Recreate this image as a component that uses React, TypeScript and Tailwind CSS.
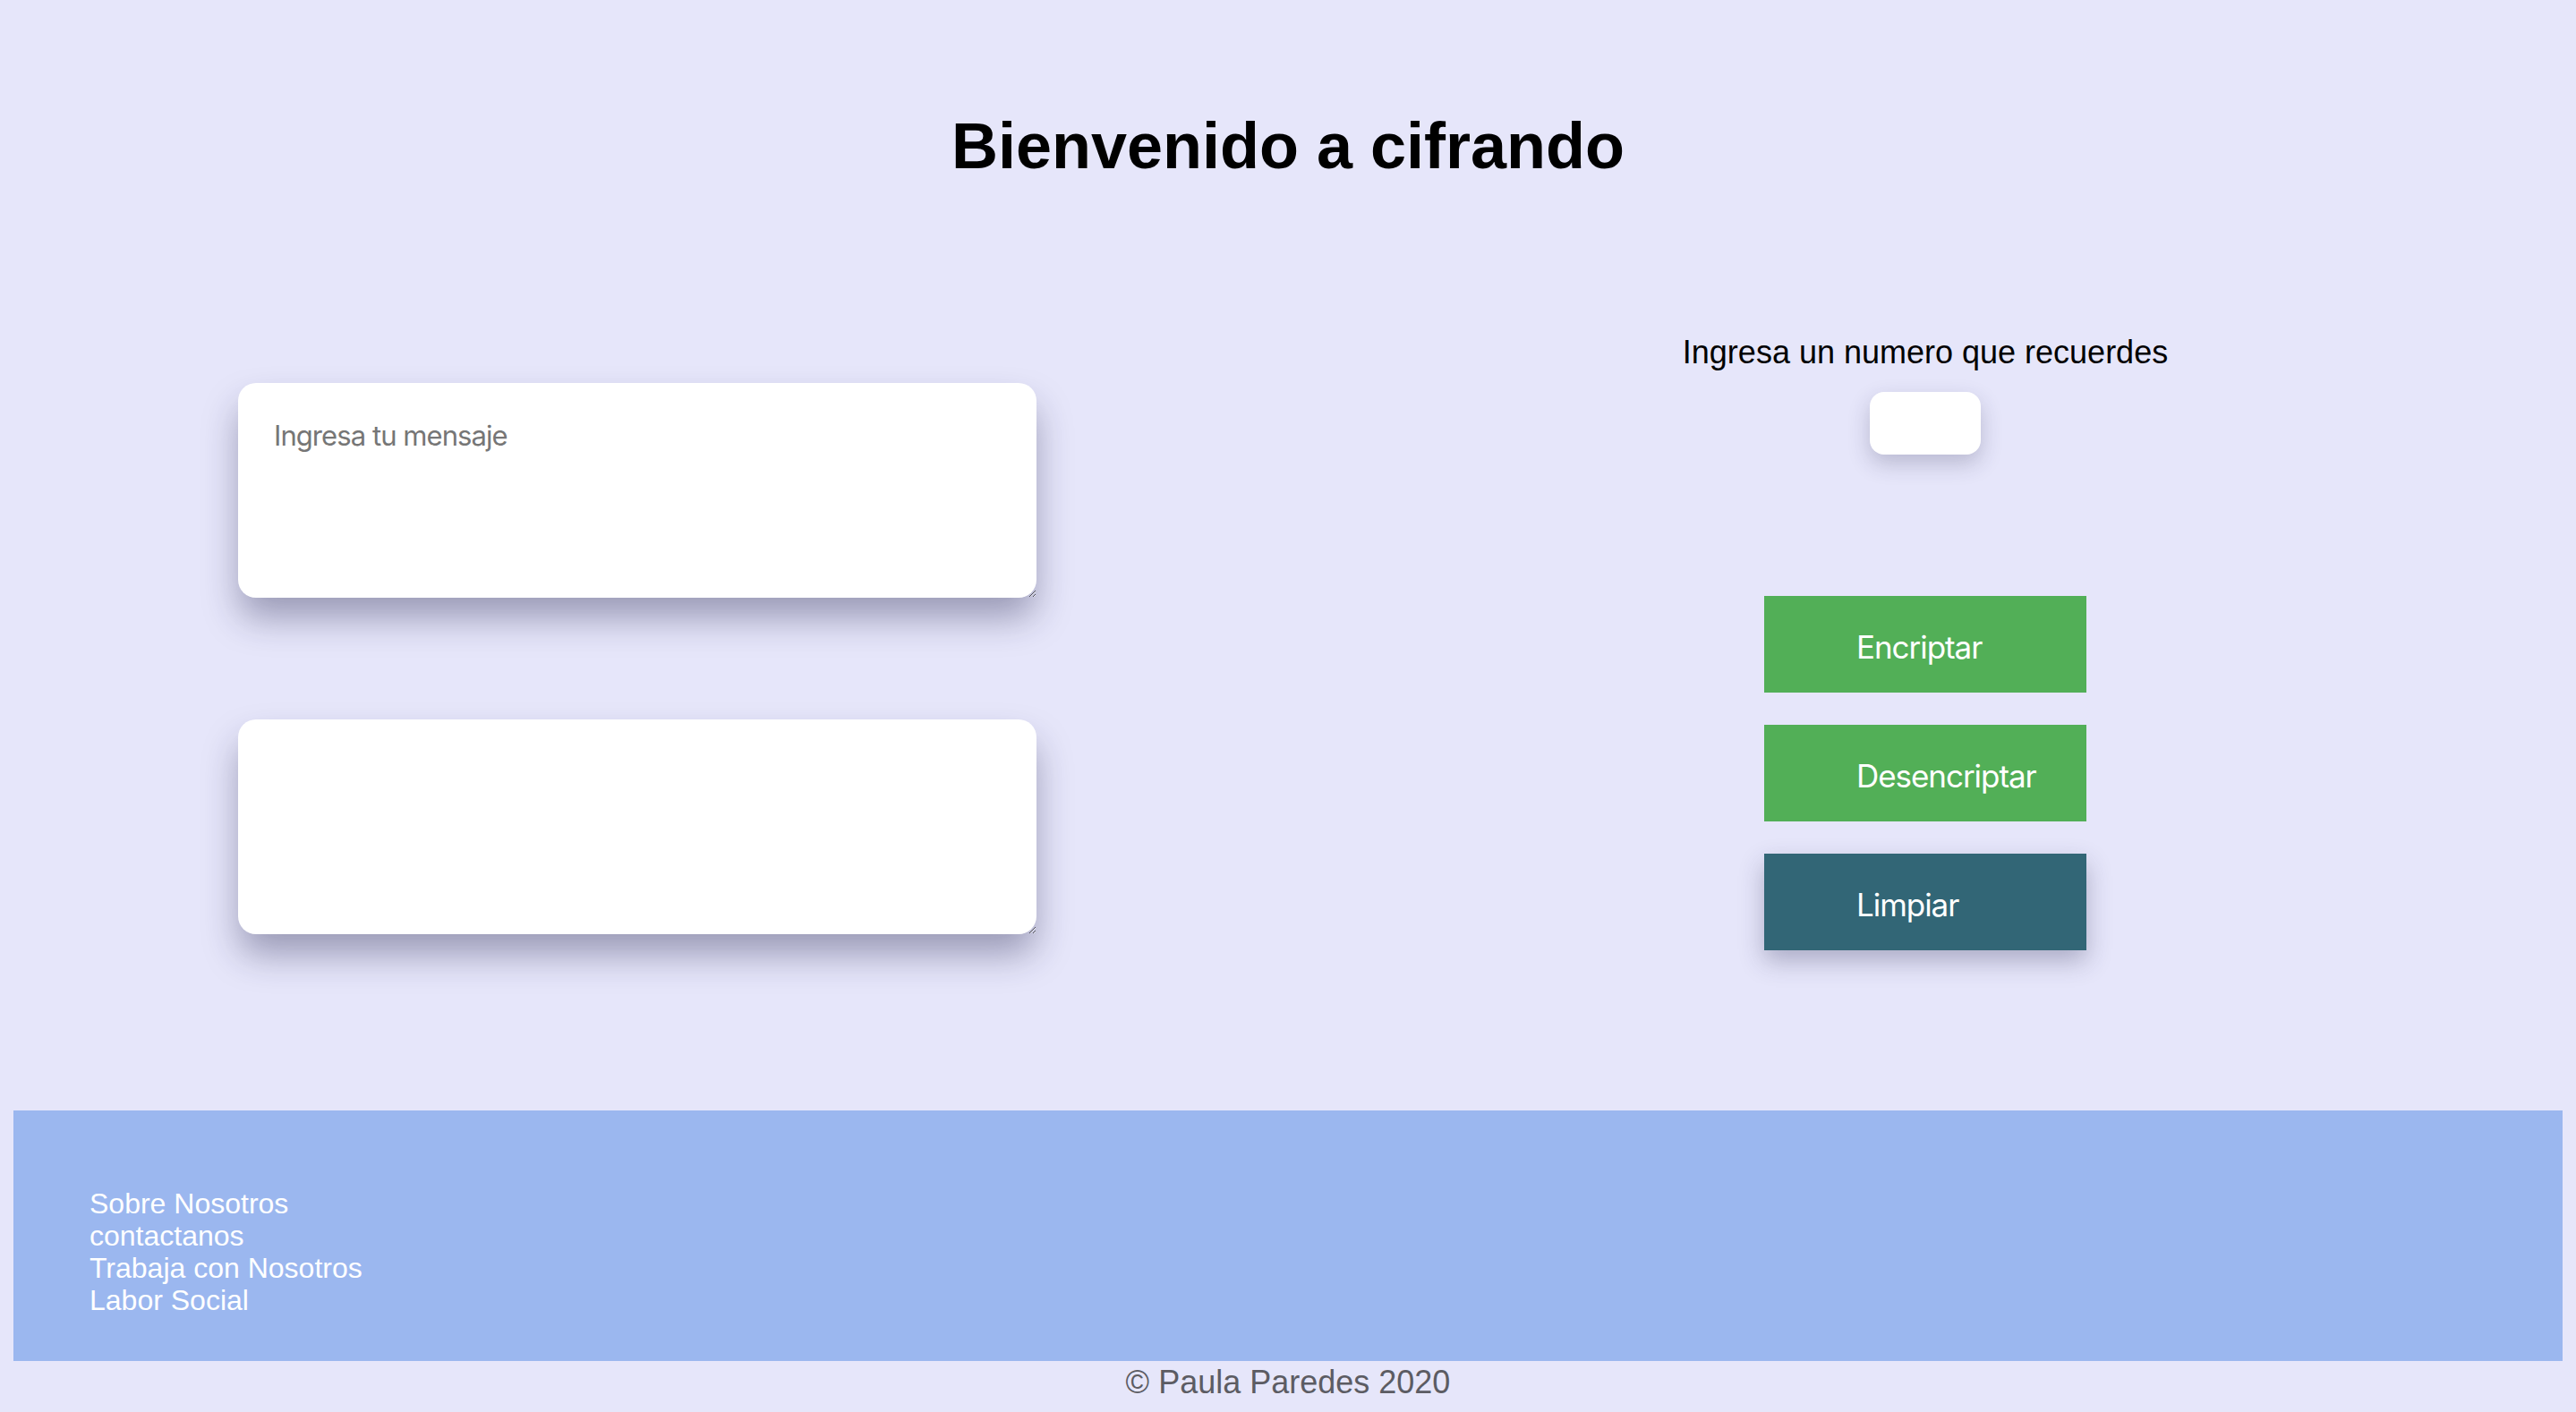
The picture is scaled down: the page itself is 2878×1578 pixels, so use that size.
import React from "react";

export default function App() {
  const sans = { fontFamily: '"Liberation Sans", Arial, sans-serif' };
  const ui = { fontFamily: 'Inter, "Noto Sans", sans-serif' };
  return (
    <div className="min-h-[1578px] bg-[#e6e6fa] px-[15px] flex flex-col" style={sans}>
      <h1 className="mt-[123px] text-center text-[72px] font-bold leading-[80px] text-black">
        Bienvenido a cifrando
      </h1>

      <div className="mt-[169px] grid grid-cols-2 items-start">
        <div className="flex flex-col gap-[136px] pt-[56px] pl-[251px]">
          <textarea
            placeholder="Ingresa tu mensaje"
            className="w-[892px] h-[240px] rounded-[20px] bg-white px-[40px] pt-[36px] pb-[40px] text-[31px] tracking-[-0.03em] text-black placeholder:text-[#767676] outline-none shadow-[0_24px_40px_-2px_rgba(30,30,70,0.38)]"
            style={ui}
          />
          <textarea
            className="w-[892px] h-[240px] rounded-[20px] bg-white px-[40px] pt-[36px] pb-[40px] text-[31px] tracking-[-0.03em] text-black outline-none shadow-[0_24px_40px_-2px_rgba(30,30,70,0.38)]"
            style={ui}
          />
        </div>

        <div className="flex flex-col items-center pt-[2px]">
          <label className="text-[36px] leading-[40px] text-black">Ingresa un numero que recuerdes</label>
          <input
            type="number"
            className="mt-[24px] w-[124px] h-[70px] rounded-[16px] bg-white outline-none shadow-[0_10px_24px_rgba(40,40,80,0.24)]"
          />
          <div className="mt-[158px] flex flex-col gap-[36px]" style={ui}>
            <button className="w-[360px] h-[108px] bg-[#52af57] pl-[103px] pt-[6px] text-left text-[35px] tracking-[-0.03em] text-white">
              Encriptar
            </button>
            <button className="w-[360px] h-[108px] bg-[#52af57] pl-[103px] pt-[6px] text-left text-[35px] tracking-[-0.03em] text-white">
              Desencriptar
            </button>
            <button className="w-[360px] h-[108px] bg-[#326676] pl-[103px] pt-[6px] text-left text-[35px] tracking-[-0.03em] text-white shadow-[0_12px_26px_rgba(40,40,80,0.3)]">
              Limpiar
            </button>
          </div>
        </div>
      </div>

      <footer className="mt-[179px] h-[280px] bg-[#9bb7ef] pl-[85px] pt-[86px]">
        <ul className="text-[32px] leading-[36px] text-white">
          <li>Sobre Nosotros</li>
          <li>contactanos</li>
          <li>Trabaja con Nosotros</li>
          <li>Labor Social</li>
        </ul>
      </footer>
      <p className="mt-[3px] text-center text-[36px] leading-[41px] text-[#5c5c63]">© Paula Paredes 2020</p>
    </div>
  );
}
